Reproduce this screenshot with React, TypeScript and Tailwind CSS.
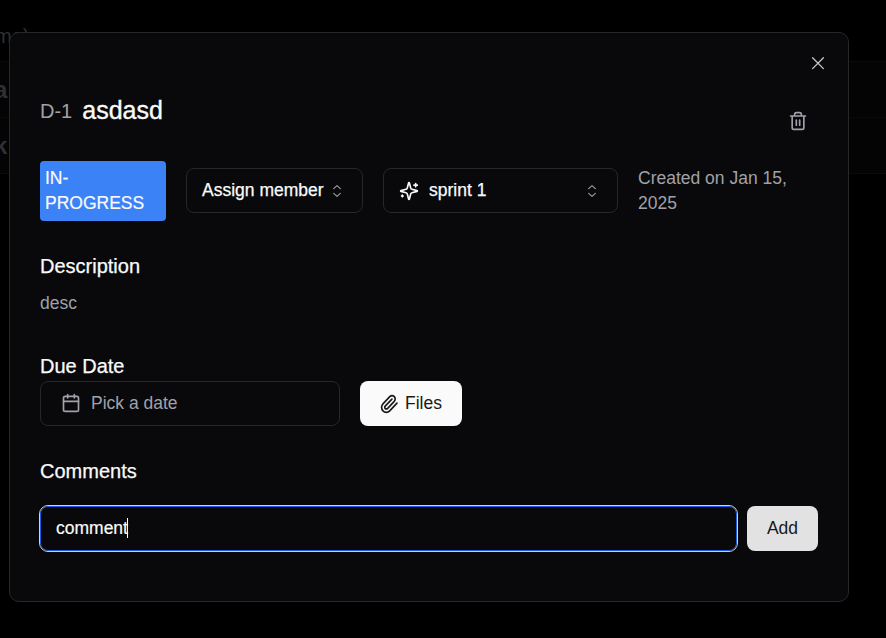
function CloseIcon() {
  return (
    <svg viewBox="0 0 15 15" className="size-5 text-[#c4c4c5]" fill="none" stroke="currentColor" strokeWidth="1" strokeLinecap="round">
      <path d="M3.45 3.6 11.55 11.7M11.55 3.6 3.45 11.7" />
    </svg>
  );
}

function TrashIcon() {
  return (
    <svg viewBox="0 0 24 24" className="size-5 text-[#a1a1aa]" fill="none" stroke="currentColor" strokeWidth="2" strokeLinecap="round" strokeLinejoin="round">
      <path d="M3 6h18M19 6v14c0 1-1 2-2 2H7c-1 0-2-1-2-2V6M8 6V4c0-1 1-2 2-2h4c1 0 2 1 2 2v2M10 11v6M14 11v6" />
    </svg>
  );
}

function SparklesIcon() {
  return (
    <svg viewBox="0 0 24 24" className="size-5" fill="none" stroke="currentColor" strokeWidth="2" strokeLinecap="round" strokeLinejoin="round">
      <path d="M9.937 15.5A2 2 0 0 0 8.5 14.063l-6.135-1.582a.5.5 0 0 1 0-.962L8.5 9.936A2 2 0 0 0 9.937 8.5l1.582-6.135a.5.5 0 0 1 .963 0L14.063 8.5A2 2 0 0 0 15.5 9.937l6.135 1.581a.5.5 0 0 1 0 .964L15.5 14.063a2 2 0 0 0-1.437 1.437l-1.582 6.135a.5.5 0 0 1-.963 0z" />
      <path d="M20 3v4M22 5h-4M4 17v2M5 18H3" />
    </svg>
  );
}

function CalendarIcon() {
  return (
    <svg viewBox="0 0 24 24" className="-mt-px size-5" fill="none" stroke="currentColor" strokeWidth="2" strokeLinecap="round" strokeLinejoin="round">
      <path d="M8 2v4M16 2v4M3 10h18" />
      <rect width="18" height="18" x="3" y="4" rx="2" />
    </svg>
  );
}

function PaperclipIcon() {
  return (
    <svg viewBox="0 0 24 24" preserveAspectRatio="none" className="mr-px h-5 w-[19px]" fill="none" stroke="currentColor" strokeWidth="2.1" strokeLinecap="round" strokeLinejoin="round">
      <path d="m21.44 11.05-9.19 9.19a6 6 0 0 1-8.49-8.49l8.57-8.57A4 4 0 1 1 18 8.84l-8.59 8.57a2 2 0 0 1-2.83-2.83l8.49-8.48" />
    </svg>
  );
}

function SortIcon() {
  return (
    <svg viewBox="0 0 24 24" className="size-4 opacity-60" fill="none" stroke="currentColor" strokeWidth="1.8" strokeLinecap="round" strokeLinejoin="round">
      <path d="m7 15.5 5 4.5 5-4.5M7 8.5 12 4l5 4.5" />
    </svg>
  );
}

function Backdrop() {
  return (
    <div className="flex h-full flex-col text-[#303032]">
      <div className="flex h-[61px] items-end pb-[11px] text-[20px] leading-[28px]">
        <span className="-ml-[5px]">me)</span>
      </div>
      <div className="flex h-[56px] items-center border-t border-[#0a0a0b] bg-[#040404] text-[24px] font-bold">
        <span className="-ml-[6px]">a</span>
      </div>
      <div className="flex h-[57px] items-center border-y border-[#0a0a0b] bg-[#040404] text-[24px] font-bold">
        <span className="-ml-[6px]">k</span>
      </div>
    </div>
  );
}

export default function App() {
  return (
    <div className="relative h-[638px] w-[886px] overflow-hidden bg-black font-['Liberation_Sans',Arial,sans-serif] text-[17.5px] leading-[25px] text-[#fafafa]">
      <Backdrop />
      <div
        role="dialog"
        className="absolute top-[32px] left-[9px] flex h-[570px] w-[840px] flex-col rounded-[10px] border border-[#27272a] bg-[#09090b] px-[30px]"
      >
        <div className="-mr-px flex h-[48px] items-end justify-end pb-[8px]">
          <button aria-label="Close" className="mr-[-9px] flex"><CloseIcon /></button>
        </div>
        <div className="flex h-[60px] justify-between">
          <div className="flex h-[60px] items-center">
            <span className="text-[20px] text-[#a1a1aa]">D-1</span>
            <h1 className="mb-[2px] ml-[10px] text-[25px] [-webkit-text-stroke:0.35px]">asdasd</h1>
          </div>
          <button aria-label="Delete" className="mt-[30px] mr-[10px] h-5"><TrashIcon /></button>
        </div>
        <div className="mt-[20px] flex gap-[20px]">
          <div className="h-[60px] w-[126px] rounded-[4px] bg-[#3b82f6] px-[5px] py-[5px] [-webkit-text-stroke:0.2px]">IN-<br />PROGRESS</div>
          <button className="mt-[7px] flex h-[45px] w-[177px] items-center rounded-[8px] border border-[#27272a] pl-[15px] [-webkit-text-stroke:0.25px]">
            Assign member
            <span className="mt-px ml-[5px]"><SortIcon /></span>
          </button>
          <button className="mt-[7px] flex h-[45px] w-[235px] items-center rounded-[8px] border border-[#27272a] pr-[17px] pl-[15px] [-webkit-text-stroke:0.25px]">
            <span className="mt-px"><SparklesIcon /></span>
            <span className="ml-[10px]">sprint 1</span>
            <span className="mt-px ml-auto"><SortIcon /></span>
          </button>
          <p className="mt-[5px] flex-1 text-[#a1a1aa]">Created on Jan 15, 2025</p>
        </div>
        <h2 className="mt-[33px] text-[20px] [-webkit-text-stroke:0.25px]">Description</h2>
        <p className="mt-[12px] text-[#a1a1aa]">desc</p>
        <h2 className="mt-[38px] text-[20px] [-webkit-text-stroke:0.25px]">Due Date</h2>
        <div className="mt-[2px] flex gap-[20px]">
          <button className="flex h-[45px] w-[300px] items-center gap-[10px] rounded-[8px] border border-[#27272a] pl-[20px] text-[#a1a1aa]">
            <CalendarIcon />
            Pick a date
          </button>
          <button className="flex h-[45px] w-[102px] items-center gap-[5px] rounded-[8px] bg-[#fafafa] pl-[20px] text-[#18181b]">
            <PaperclipIcon />
            Files
          </button>
        </div>
        <h2 className="mt-[33px] text-[20px] [-webkit-text-stroke:0.25px]">Comments</h2>
        <div className="mt-[21px] flex justify-between">
          <div className="-ml-px h-[47px] w-[699px] rounded-[9px] border border-[#d4d4d8] bg-[#09090b]">
            <div className="flex h-full items-center rounded-[8px] border border-[#1d5ce8] pb-px pl-[15px] [-webkit-text-stroke:0.2px]">
              comment
              <span className="-ml-px h-[20px] w-px bg-white" />
            </div>
          </div>
          <button className="mt-px h-[45px] w-[71px] rounded-[8px] bg-[#e2e2e2] text-[#18181b]">Add</button>
        </div>
      </div>
    </div>
  );
}
